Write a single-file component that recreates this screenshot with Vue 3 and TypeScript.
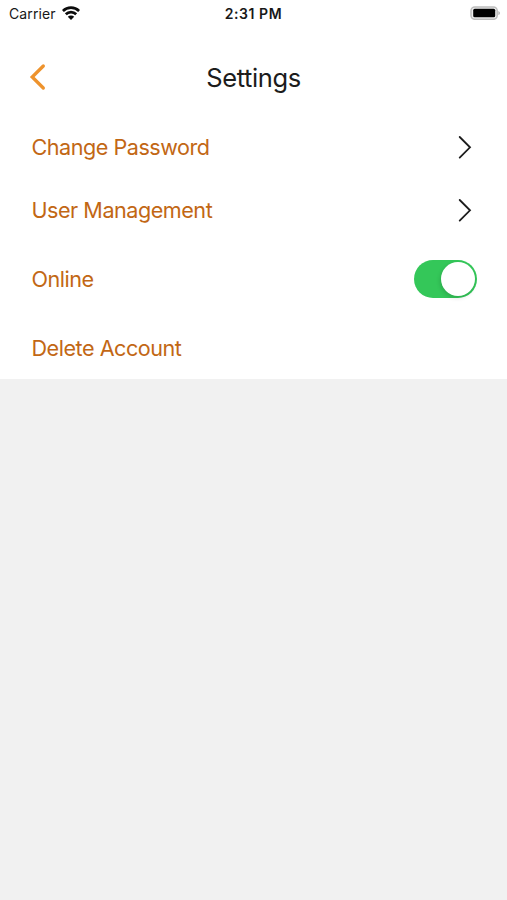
<script setup lang="ts">
import { ref } from 'vue'

interface Row {
  label: string
  kind: 'link' | 'toggle' | 'action'
}

const rows: Row[] = [
  { label: 'Change Password', kind: 'link' },
  { label: 'User Management', kind: 'link' },
  { label: 'Online', kind: 'toggle' },
  { label: 'Delete Account', kind: 'action' },
]
const online = ref(true)
</script>

<template>
  <main class="screen">
    <div class="panel">
      <div class="status">
        <div class="carrier">
          <span class="carrier-name">Carrier</span>
          <svg class="wifi" width="18" height="14" viewBox="0 0 18 14">
            <g fill="none" stroke="#0c0c0c" stroke-width="2.7">
              <path d="M.9 5a11.5 11.5 0 0 1 16.2 0" />
              <path d="M3.8 8.3a7.4 7.4 0 0 1 10.4 0" />
            </g>
            <path d="M9 13.9L5.8 10.8a4.5 4.5 0 0 1 6.4 0z" fill="#0c0c0c" />
          </svg>
        </div>
        <span class="time">2:31 PM</span>
        <svg class="battery" width="30" height="14" viewBox="0 0 30 14">
          <rect x="1" y="0.9" width="26.2" height="12.4" rx="3.8" fill="#eee" stroke="#bdbdbd" stroke-width="1.5" />
          <rect x="3.2" y="2.8" width="22" height="8.5" rx="1.5" fill="#000" />
          <path d="M28.4 4.9c2 .8 2 3.4 0 4.2z" fill="#b0b0b0" />
        </svg>
      </div>
      <header class="header">
        <button class="back" aria-label="Back">
          <svg width="18" height="28" viewBox="0 0 18 28">
            <path d="M14.3 3L3.2 14l11.1 11" fill="none" stroke="#ee932d" stroke-width="3.3" stroke-linecap="round" stroke-linejoin="miter" />
          </svg>
        </button>
        <h1 class="title">Settings</h1>
      </header>
      <div v-for="row in rows" :key="row.label" class="row" :class="row.kind">
        <span class="label">{{ row.label }}</span>
        <svg v-if="row.kind === 'link'" class="chevron" width="14" height="24" viewBox="0 0 14 24">
          <path d="M1.7 2L12 12.3L1.7 22.6" fill="none" stroke="#1c1c1c" stroke-width="1.8" stroke-linecap="round" />
        </svg>
        <button
          v-if="row.kind === 'toggle'"
          class="switch"
          :class="{ on: online }"
          role="switch"
          :aria-checked="online"
          @click="online = !online"
        >
          <span class="knob"></span>
        </button>
      </div>
    </div>
  </main>
</template>

<style>
body {
  background: #f1f1f1;
}
</style>

<style scoped>
.screen {
  min-height: 900px;
  background: #f1f1f1;
  font-family: Inter, Roboto, sans-serif;
}
.panel {
  box-sizing: border-box;
  height: 379px;
  background: #fff;
}
.status {
  display: grid;
  grid-template-columns: 1fr auto 1fr;
  align-items: center;
  height: 27px;
  padding: 0 7px 0 9px;
  color: #181818;
}
.carrier {
  display: flex;
  align-items: center;
  gap: 6px;
}
.carrier-name {
  font-size: 14px;
  line-height: 18px;
  letter-spacing: 0.12px;
}
.wifi {
  display: block;
  margin-bottom: 2px;
}
.time {
  margin-right: 2px;
  font-size: 14px;
  font-weight: 600;
  line-height: 18px;
  letter-spacing: 0.55px;
}
.battery {
  justify-self: end;
  margin-bottom: 1px;
}
.header {
  display: grid;
  grid-template-columns: 60px 1fr 60px;
  align-items: center;
  height: 100px;
  margin-bottom: -12px;
}
.back {
  padding: 0;
  margin-left: 29px;
  border: 0;
  background: none;
  width: 18px;
  height: 28px;
}
.back svg {
  display: block;
}
.title {
  margin: 0;
  padding-top: 1px;
  text-align: center;
  font-size: 25.5px;
  font-weight: 380;
  line-height: 30px;
  letter-spacing: -0.4px;
  color: #1c1c1c;
}
.row {
  display: flex;
  align-items: center;
  justify-content: space-between;
  height: 63px;
  padding: 0 30px 0 31.5px;
}
.row.link {
  padding-right: 35px;
}
.row.toggle {
  height: 75px;
}
.label {
  padding-top: 1px;
  font-size: 21.6px;
  font-weight: 370;
  line-height: 28px;
  letter-spacing: -0.48px;
  color: #c26714;
}
.switch {
  display: flex;
  align-items: center;
  width: 63px;
  height: 38px;
  padding: 2px;
  border: 0;
  border-radius: 19px;
  background: #e4e4e6;
}
.switch.on {
  justify-content: flex-end;
  background: #34c759;
}
.knob {
  width: 34px;
  height: 34px;
  border-radius: 50%;
  background: #fff;
  box-shadow: -1px 2px 4px rgba(0, 0, 0, 0.14);
}
</style>
